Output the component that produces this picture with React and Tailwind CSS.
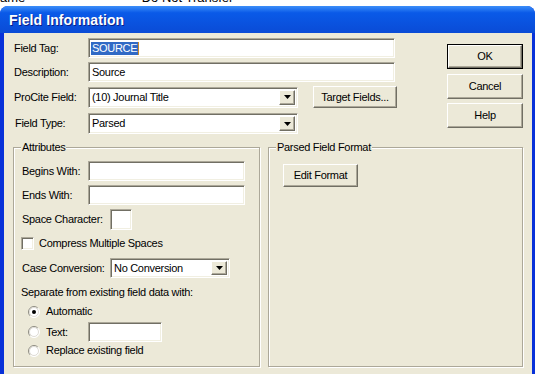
const sunken =
  "bg-white border border-t-[#aca899] border-l-[#aca899] border-b-white border-r-white shadow-[inset_1px_1px_0_#716f64,inset_-1px_-1px_0_#f1efe2]";
const raised =
  "bg-[#ece9d8] border border-t-white border-l-white border-b-[#716f64] border-r-[#716f64] shadow-[inset_-1px_-1px_0_#aca899]";

function TextBox({ className = "", children }) {
  return <div className={`${sunken} flex items-center px-[3px] ${className}`}>{children}</div>;
}

function Arrow() {
  return (
    <svg width="7" height="4" viewBox="0 0 7 4">
      <path d="M0 0h7L3.5 4z" fill="#000" />
    </svg>
  );
}

function Select({ value, className = "" }) {
  return (
    <div className={`${sunken} flex items-stretch p-[2px] ${className}`}>
      <span className="flex-1 flex items-center pl-[1px]">{value}</span>
      <span className={`${raised} w-[16px] flex items-center justify-center`}>
        <Arrow />
      </span>
    </div>
  );
}

function Button({ children, className = "" }) {
  return <div className={`${raised} flex items-center justify-center ${className}`}>{children}</div>;
}

function Radio({ checked, id }) {
  return (
    <svg width="12" height="12" viewBox="0 0 12 12" className="shrink-0">
      <defs>
        <linearGradient id={id} x1="0" y1="0" x2="1" y2="1">
          <stop offset="0.45" stopColor="#8c8a80" />
          <stop offset="0.55" stopColor="#ffffff" />
        </linearGradient>
      </defs>
      <circle cx="6" cy="6" r="5.5" fill="#fff" stroke={`url(#${id})`} strokeWidth="1" />
      <circle cx="6" cy="6" r="4.5" fill="#fff" stroke="#d4d0c8" strokeWidth="0.8" />
      {checked && <circle cx="6" cy="6" r="2" fill="#000" />}
    </svg>
  );
}

function GroupBox({ title, className = "", children }) {
  return (
    <div className={`relative border border-[#aca899] shadow-[inset_1px_1px_0_#fff,1px_1px_0_#fff] ${className}`}>
      <span className="absolute -top-[8px] left-[7px] bg-[#ece9d8] px-[1px] leading-[14px]">{title}</span>
      {children}
    </div>
  );
}

export default function App() {
  return (
    <div
      className="w-[535px] h-[374px] overflow-hidden bg-white text-[11px] tracking-[-0.3px] text-black leading-none"
      style={{ fontFamily: '"Liberation Sans", Arial, sans-serif' }}
    >
      {/* window behind the dialog, mostly hidden */}
      <div className="h-[6px] overflow-hidden">
        <div className="flex -mt-[9px] text-[13px] leading-[14px] tracking-normal">
          <span className="w-[133px]">ame</span>
          <span>* Do Not Transfer</span>
        </div>
      </div>

      <div className="w-[535px] h-[368px] flex flex-col rounded-t-[8px] overflow-hidden bg-[#0831d9]">
        <div className="h-[27px] shrink-0 flex items-center pl-[9px] pt-[1px] bg-linear-to-b from-[#3c8ef9] from-0% via-[#0a5ae8] via-25% to-[#0a4bd6] to-100%">
          <span className="text-white font-bold text-[14px] tracking-[0.1px] [text-shadow:1px_1px_0_#0a1f8a]">
            Field Information
          </span>
        </div>

        <div className="flex-1 ml-[4px] mr-[3px] bg-[#ece9d8] flex flex-col">
          <div className="flex">
            <div className="flex flex-col pl-[10px]">
              <div className="mt-[5px] h-[20px] flex items-center">
                <span className="w-[74px]">Field Tag:</span>
                <TextBox className="w-[307px] h-[20px]">
                  <span className="bg-[#316ac5] text-white px-[1px] py-[1px] ml-[-1px]">SOURCE</span>
                  <span className="w-[1px] h-[13px] bg-[#c88a2a]" />
                </TextBox>
              </div>
              <div className="mt-[4px] h-[20px] flex items-center">
                <span className="w-[74px]">Description:</span>
                <TextBox className="w-[307px] h-[20px]">Source</TextBox>
              </div>
              <div className="mt-[4px] h-[22px] flex items-center">
                <span className="w-[74px]">ProCite Field:</span>
                <Select value="(10) Journal Title" className="w-[210px] h-[21px]" />
                <Button className="ml-[15px] w-[84px] h-[22px]">Target Fields...</Button>
              </div>
              <div className="mt-[5px] h-[21px] flex items-center">
                <span className="w-[74px] pl-[1px]">Field Type:</span>
                <Select value="Parsed" className="w-[210px] h-[21px]" />
              </div>
            </div>

            <div className="ml-auto mr-[9px] flex flex-col w-[76px]">
              <div className="mt-[11px] h-[25px] border border-black flex">
                <Button className="flex-1">OK</Button>
              </div>
              <Button className="mt-[5px] h-[25px]">Cancel</Button>
              <Button className="mt-[4px] h-[25px]">Help</Button>
            </div>
          </div>

          <div className="mt-[13px] pl-[9px] flex gap-[8px]">
            <GroupBox title="Attributes" className="w-[247px] h-[220px]">
              <div className="flex flex-col pl-[8px]">
                <div className="mt-[13px] h-[20px] flex items-center">
                  <span className="w-[66px]">Begins With:</span>
                  <TextBox className="w-[157px] h-[20px]" />
                </div>
                <div className="mt-[4px] h-[20px] flex items-center">
                  <span className="w-[66px]">Ends With:</span>
                  <TextBox className="w-[157px] h-[20px]" />
                </div>
                <div className="mt-[4px] h-[21px] flex items-center">
                  <span className="w-[88px]">Space Character:</span>
                  <TextBox className="w-[22px] h-[21px]" />
                </div>
                <div className="mt-[7px] h-[13px] flex items-center -ml-[1px]">
                  <span className={`${sunken} w-[13px] h-[13px]`} />
                  <span className="ml-[5px]">Compress Multiple Spaces</span>
                </div>
                <div className="mt-[8px] h-[20px] flex items-center">
                  <span className="w-[88px]">Case Conversion:</span>
                  <Select value="No Conversion" className="w-[120px] h-[20px]" />
                </div>
                <div className="mt-[7px] h-[14px] flex items-center -ml-[1px]">
                  Separate from existing field data with:
                </div>
                <div className="mt-[6px] h-[13px] flex items-center pl-[6px]">
                  <Radio id="r1" checked />
                  <span className="ml-[6px]">Automatic</span>
                </div>
                <div className="mt-[4px] h-[20px] flex items-center pl-[6px]">
                  <Radio id="r2" />
                  <span className="ml-[6px] w-[42px]">Text:</span>
                  <TextBox className="w-[74px] h-[20px]" />
                </div>
                <div className="mt-[2px] h-[13px] flex items-center pl-[6px]">
                  <Radio id="r3" />
                  <span className="ml-[6px]">Replace existing field</span>
                </div>
              </div>
            </GroupBox>

            <GroupBox title="Parsed Field Format" className="w-[255px] h-[220px]">
              <div className="pl-[14px] pt-[16px]">
                <Button className="w-[75px] h-[23px]">Edit Format</Button>
              </div>
            </GroupBox>
          </div>
        </div>
      </div>
    </div>
  );
}
